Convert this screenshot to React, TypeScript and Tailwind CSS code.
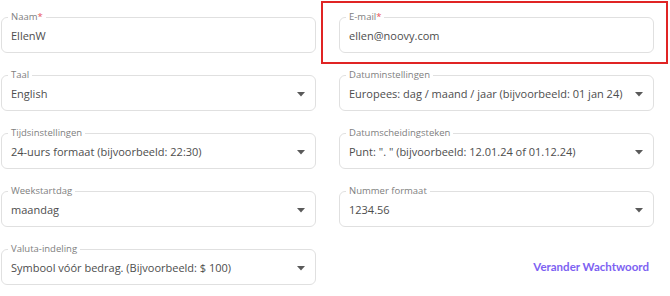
import React from "react";

const font = { fontFamily: '"Open Sans", "Liberation Sans", sans-serif' };

function Arrow() {
  return (
    <svg width="8" height="5" viewBox="0 0 8 5" className="shrink-0">
      <path d="M0 0 L8 0 L4 4.5 Z" fill="#5a5a5a" />
    </svg>
  );
}

function Field({ label, value, required, select }: { label: string; value: string; required?: boolean; select?: boolean }) {
  return (
    <fieldset className="border border-[#e0e0e0] rounded-[6px] h-[42px] min-w-0">
      <legend className="ml-[6px] px-[3px] text-[9.5px] leading-[12px] text-[#808080]">
        {label}
        {required && <span className="text-[#e8505b]">*</span>}
      </legend>
      <div className="h-[29px] flex items-center pl-[9px] pr-[10px] -mt-[1px]">
        <span className="flex-1 text-[11px] text-[#4d4d4d] truncate">{value}</span>
        {select && <Arrow />}
      </div>
    </fieldset>
  );
}

export default function App() {
  return (
    <div className="relative w-[670px] h-[296px] bg-white" style={font}>
      <div className="grid grid-cols-2 gap-x-[23px] gap-y-4 pl-[1px] pr-[16px] pt-[11px]">
        <Field label="Naam" value="EllenW" required />
        <Field label="E-mail" value="ellen@noovy.com" required />
        <Field label="Taal" value="English" select />
        <Field label="Datuminstellingen" value="Europees: dag / maand / jaar (bijvoorbeeld: 01 jan 24)" select />
        <Field label="Tijdsinstellingen" value="24-uurs formaat (bijvoorbeeld: 22:30)" select />
        <Field label="Datumscheidingsteken" value={'Punt: ". " (bijvoorbeeld: 12.01.24 of 01.12.24)'} select />
        <Field label="Weekstartdag" value="maandag" select />
        <Field label="Nummer formaat" value="1234.56" select />
        <Field label="Valuta-indeling" value="Symbool vóór bedrag. (Bijvoorbeeld: $ 100)" select />
        <div className="flex items-center justify-end pr-[5px] pt-[6px]">
          <span className="text-[11.5px] font-bold text-[#7d62f2]" style={{ fontFamily: 'Lato, sans-serif' }}>Verander Wachtwoord</span>
        </div>
      </div>
      <div className="absolute left-[321px] top-[1px] w-[347px] h-[63px] border-2 border-[#e02424]" />
    </div>
  );
}
